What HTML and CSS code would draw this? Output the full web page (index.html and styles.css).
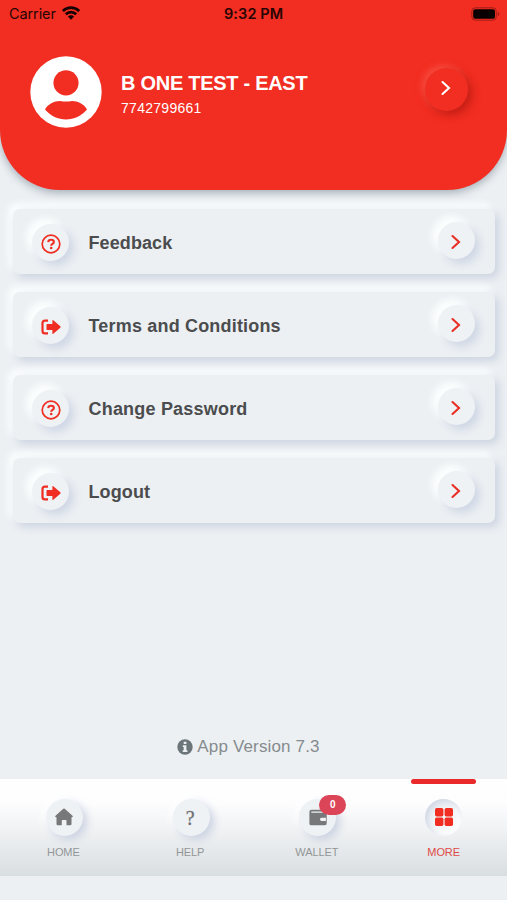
FILE: index.html
```html
<!DOCTYPE html>
<html lang="en">
<head>
<meta charset="utf-8">
<title>More</title>
<link rel="stylesheet" href="styles.css">
</head>
<body>
<svg width="0" height="0" class="defs" aria-hidden="true">
  <symbol id="chevron" viewBox="0 0 10 16"><path d="M1.500 2 8 8l-6.500 6" fill="none" stroke="currentColor" stroke-width="2.100" stroke-linecap="round" stroke-linejoin="miter"/></symbol>
  <symbol id="question" viewBox="0 0 20 20"><circle cx="10" cy="10" r="8.800" fill="none" stroke="currentColor" stroke-width="1.700"/><path d="M7.200 8.100C7.400 6.400 8.400 5.700 10 5.700c1.700 0 2.900.9 2.900 2.300 0 1.900-2.700 1.900-2.700 3.700" fill="none" stroke="currentColor" stroke-width="2.100"/><circle cx="10.200" cy="14" r="1.300" fill="currentColor"/></symbol>
  <symbol id="exit" viewBox="0 0 20 16"><path d="M7 1.600H4Q1.500 1.600 1.500 4v8q0 2.400 2.500 2.400h3" fill="none" stroke="currentColor" stroke-width="2.200"/><path d="M6.200 5h5.200V1.600q0-1 .9-.3l7 6q.7.700 0 1.400l-7 6q-.9.700-.9-.3V11H6.200q-.7 0-.7-.7V5.700q0-.7.7-.7z" fill="currentColor"/></symbol>
</svg>
<header class="header">
  <div class="status">
    <span class="carrier">Carrier</span>
    <svg class="wifi" viewBox="0 0 18 14"><g fill="none" stroke="currentColor" stroke-width="2.700"><path d="M.8 5.100a11.600 11.600 0 0 1 16.400 0"/><path d="M3.800 8.300a7.400 7.400 0 0 1 10.400 0"/></g><path d="M5.900 10.600a4.400 4.400 0 0 1 6.200 0L9 13.800z" fill="currentColor"/></svg>
    <span class="time">9:32 PM</span>
    <svg class="battery" viewBox="0 0 29 14"><rect x=".8" y=".8" width="24.500" height="12.400" rx="3.500" fill="none" stroke="#a01d18" stroke-width="1"/><rect x="2.200" y="2.200" width="21.800" height="9.600" rx="2" fill="#080000"/><path d="M26.800 5q1.600.5 1.600 2t-1.600 2z" fill="#a01d18"/></svg>
  </div>
  <div class="profile">
    <svg class="avatar" viewBox="0 0 72 72"><circle cx="36" cy="36" r="35.700" fill="#fff"/><circle cx="36" cy="26.800" r="12.600" fill="#f22d21"/><path d="M15 53.500C18 48 24 45 30 45q6 1 12 0c6 0 12 3 15 8.500C51.500 60 44 63.500 36 63.500S20.500 60 15 53.500z" fill="#f22d21"/></svg>
    <div class="who"><div class="name">B ONE TEST - EAST</div><div class="phone">7742799661</div></div>
    <span class="open"><svg class="chev"><use href="#chevron"/></svg></span>
  </div>
</header>
<main class="menu">
  <div class="card"><span class="knob lead"><svg class="qicon"><use href="#question"/></svg></span><span class="label l1">Feedback</span><span class="knob go"><svg class="chev"><use href="#chevron"/></svg></span></div>
  <div class="card"><span class="knob lead"><svg class="eicon"><use href="#exit"/></svg></span><span class="label l2">Terms and Conditions</span><span class="knob go"><svg class="chev"><use href="#chevron"/></svg></span></div>
  <div class="card"><span class="knob lead"><svg class="qicon"><use href="#question"/></svg></span><span class="label l3">Change Password</span><span class="knob go"><svg class="chev"><use href="#chevron"/></svg></span></div>
  <div class="card"><span class="knob lead"><svg class="eicon"><use href="#exit"/></svg></span><span class="label l4">Logout</span><span class="knob go"><svg class="chev"><use href="#chevron"/></svg></span></div>
</main>
<div class="version">
  <svg class="info" viewBox="0 0 16 16"><circle cx="8" cy="8" r="7.700" fill="#6c757a"/><path d="M6.700 2.800h2.700V5H6.700zM5.800 6.300h3.600v5h1v1.700H5.700v-1.700h1V8h-.9z" fill="#ecf0f3"/></svg>
  <span>App Version 7.3</span>
</div>
<nav class="tabs">
  <div class="tab"><span class="knob"><svg width="18" height="18" viewBox="0 0 18 18"><path d="M8.300.8q.7-.6 1.400 0l7.800 7q.9 1.200-.5 1.400h-.5v6.700q0 1.300-1.300 1.300h-3.700v-4.500q0-.8-.8-.8H7.600q-.8 0-.8.8v4.500H2.800q-1.300 0-1.300-1.300V9.200H1q-1.400-.2-.5-1.400z" fill="#77787a"/></svg></span><span class="caption">HOME</span></div>
  <div class="tab"><span class="knob mark">?</span><span class="caption">HELP</span></div>
  <div class="tab"><span class="knob"><svg width="18" height="17" viewBox="0 0 18 17"><path d="M2.500.7h13q1.200 0 1.200 1.200v.5H3q-1 0-1 .7t1 .7h13.200q1.500 0 1.500 1.500v9.200q0 1.800-1.800 1.800H2.300Q.4 16.300.4 14.400V2.700Q.4.700 2.500.7z" fill="#77787a"/><path d="M12.500 8.700h4.400V12h-4.400Q11 12 11 10.350t1.500-1.650z" fill="#f1f3f5"/></svg><span class="badge">0</span></span><span class="caption">WALLET</span></div>
  <div class="tab active"><span class="knob"><svg width="18" height="18" viewBox="0 0 18 18" fill="#f22d21"><rect width="8.400" height="8.400" rx="1.700"/><rect x="9.600" width="8.400" height="8.400" rx="1.700"/><rect y="9.600" width="8.400" height="8.400" rx="1.700"/><rect x="9.600" y="9.600" width="8.400" height="8.400" rx="1.700"/></svg></span><span class="caption">MORE</span></div>
</nav>
</body>
</html>
```
FILE: styles.css
```css
* { box-sizing: border-box; }
body {
  margin: 0;
  height: 900px;
  overflow: hidden;
  display: flex;
  flex-direction: column;
  background: #ecf0f3;
  font-family: "Liberation Sans", Arial, sans-serif;
}
svg { display: block; flex: none; }
.defs { position: absolute; }
.header {
  height: 190px;
  flex: none;
  background: #f22d21;
  border-radius: 0 0 60px 60px;
  box-shadow: 0 3px 8px rgba(80, 95, 110, .45);
}
.status {
  height: 28px;
  padding: 0 7px 0 9px;
  display: grid;
  grid-template-columns: 53px 1fr auto 1fr 29px;
  align-items: center;
  color: #260504;
}
.carrier { font: 14.500px/28px Inter, sans-serif; letter-spacing: -.1px; }
.wifi { width: 18px; height: 14px; margin-top: -2px; color: #160101; }
.time { font: 600 14.500px/28px Inter, sans-serif; width: 60px; white-space: nowrap; margin-left: -25px; letter-spacing: .1px; }
.battery { width: 29px; height: 14px; grid-column: 5; margin-top: -1px; }
.profile { height: 72px; margin: 28px 39px 0 30px; display: flex; }
.avatar { width: 72px; height: 72px; }
.who { margin: 15px 0 0 19px; color: #fff; flex: 1; }
.name { font-size: 20px; font-weight: 700; line-height: 24px; letter-spacing: -.28px; white-space: nowrap; }
.phone { font-size: 14px; line-height: 18px; margin-top: 4px; letter-spacing: .28px; }
.open {
  width: 43px; height: 43px; margin-top: 12px;
  border-radius: 50%;
  display: flex; align-items: center; justify-content: center;
  padding: 0 2px 3px 0;
  color: #fff;
  box-shadow: 4px 4px 9px rgba(150, 15, 10, .5), -3px -3px 7px rgba(255, 110, 95, .5);
}
.chev { width: 10px; height: 16px; }
.menu { display: flex; flex-direction: column; gap: 18px; margin: 19px 12px 0 13px; }
.card {
  height: 65px;
  flex: none;
  display: flex;
  align-items: flex-start;
  padding: 0 20px 0 19px;
  border-radius: 7px;
  background: #ecf0f3;
  box-shadow: 4px 4px 8px #cdd4e1, -4px -5px 6px 1px #fafcfd;
}
.knob {
  position: relative;
  width: 37px; height: 37px;
  border-radius: 50%;
  display: flex; align-items: center; justify-content: center;
  background: #eff2f5;
  box-shadow: 5px 5px 9px #d0d7e5, -5px -5px 7px 1px #fcfefe;
}
.lead { margin-top: 15px; color: #ef2d22; padding-top: 3px; }
.qicon { width: 20px; height: 20px; }
.eicon { width: 20px; height: 16px; }
.go { margin-top: 13px; color: #e92e25; padding: 3px 1px 0 0; }
.label { flex: 1; margin-left: 19.500px; line-height: 69px; font-size: 18px; font-weight: 700; color: #4b4c4e; white-space: nowrap; }
.l1 { letter-spacing: .1px; }
.l2 { letter-spacing: .18px; }
.l3 { letter-spacing: .2px; }
.l4 { letter-spacing: .1px; }
.version {
  margin-top: auto;
  height: 22px;
  margin-bottom: 21px;
  padding-right: 10px;
  flex: none;
  display: flex; align-items: center; justify-content: center;
  gap: 4px;
  color: #858b8e;
  font-size: 17px;
  letter-spacing: .15px;
}
.info { width: 16px; height: 16px; }
.tabs {
  height: 97px;
  flex: none;
  margin-bottom: 24px;
  display: grid;
  grid-template-columns: repeat(4, 1fr);
  background: linear-gradient(#fff 0%, #fdfdfe 25%, #d9dee1 100%);
}
.tab { display: flex; flex-direction: column; align-items: center; padding-top: 20px; position: relative; }
.tab .knob { left: 1px; padding-bottom: 1px; box-shadow: 4px 4px 9px #cbd2e2, -3px -3px 8px #fff; }
.caption { margin-top: 8px; font-size: 11px; line-height: 16px; letter-spacing: -.1px; color: #929698; }
.tab .mark { font: 20px "Liberation Serif", serif; color: #6f7072; padding: 2px 2px 0 0; -webkit-text-stroke: .3px #6f7072; }
.badge {
  position: absolute; left: 20px; top: -4px;
  width: 27px; height: 20px; border-radius: 10px;
  background: #db4557; color: #fff;
  font-size: 10px; font-weight: 700; line-height: 20px; text-align: center;
}
.active::before { content: ""; position: absolute; top: 0; width: 65px; height: 5px; border-radius: 3px; background: #e9292a; }
.tab.active .knob { left: 0; background: #f2f5f8; box-shadow: inset 3px 3px 7px #d0d6e4, inset -4px -4px 7px #fff; }
.active .caption { color: #df4946; }
```
